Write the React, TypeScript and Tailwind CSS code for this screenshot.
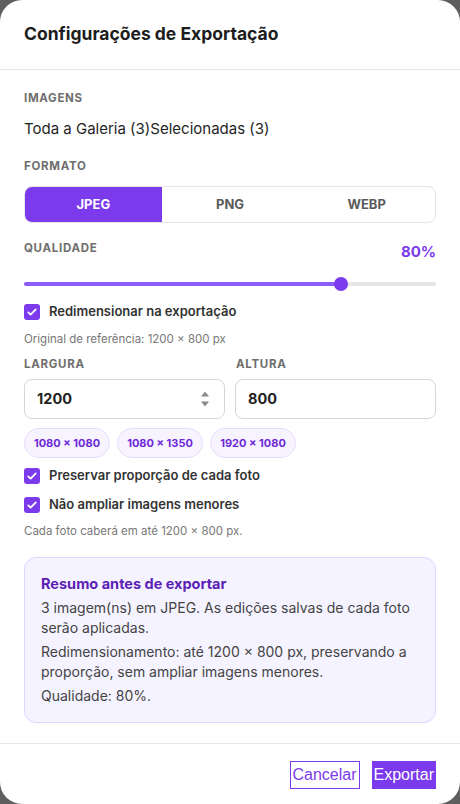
import React from "react";

const font = { fontFamily: "Inter, 'Noto Sans', sans-serif" };

function Label({ children }: { children: React.ReactNode }) {
  return (
    <div className="text-[11.5px] font-bold uppercase leading-4 tracking-[0.06em] text-[#6e6e6e]">
      {children}
    </div>
  );
}

function Check({ label, className = "" }: { label: string; className?: string }) {
  return (
    <div className={`flex h-[18px] items-center gap-[9px] ${className}`}>
      <span className="flex h-4 w-4 items-center justify-center rounded-[3px] bg-[#7c3aed]">
        <svg viewBox="0 0 16 16" className="h-3 w-3" fill="none">
          <path d="M3 8.5l3.2 3L13 4.5" stroke="white" strokeWidth="2.4" strokeLinecap="round" strokeLinejoin="round" />
        </svg>
      </span>
      <span className="text-[13px] font-semibold text-[#333]">{label}</span>
    </div>
  );
}

export default function App() {
  const formats = ["JPEG", "PNG", "WEBP"];
  const presets = ["1080 × 1080", "1080 × 1350", "1920 × 1080"];

  return (
    <div className="h-[804px] w-[460px] bg-[#5e5e5e]" style={font}>
      <div className="flex h-full w-full flex-col rounded-[22px] bg-white">
        <header className="flex h-[70px] shrink-0 items-center border-b border-[#e6e6e6] px-6">
          <h1 className="text-[17.5px] font-bold text-[#1d1d1d]">Configurações de Exportação</h1>
        </header>

        <div className="flex flex-1 flex-col border-b border-[#e6e6e6] px-6 pt-5">
          <Label>Imagens</Label>
          <div className="mt-[13px] text-[15px] leading-5 text-[#1f1f1f]">
            <span>Toda a Galeria (3)</span>
            <span>Selecionadas (3)</span>
          </div>

          <div className="mt-[19px]">
            <Label>Formato</Label>
          </div>
          <div className="mt-3 flex h-[37px] overflow-hidden rounded-lg border border-[#e6e6e6]">
            {formats.map((f, i) => (
              <div
                key={f}
                className={`flex flex-1 items-center justify-center text-[13px] font-bold ${
                  i === 0 ? "bg-[#7c3aed] text-white" : "text-[#5a5a5a]"
                }`}
              >
                {f}
              </div>
            ))}
          </div>

          <div className="mt-[17px] flex items-start justify-between">
            <Label>Qualidade</Label>
            <span className="mt-[2px] text-[15px] font-bold leading-5 text-[#7c3aed]">80%</span>
          </div>

          <div className="relative mt-[15px] flex h-[14px] items-center">
            <div className="h-1 w-full rounded-full bg-[#e6e6e6]">
              <div className="h-1 w-[77%] rounded-full bg-[#8b5cf6]" />
            </div>
            <span className="absolute left-[310px] top-0 h-[14px] w-[14px] rounded-full bg-[#7c3aed]" />
          </div>

          <Check label="Redimensionar na exportação" className="mt-3" />
          <div className="mt-[10px] text-[11.5px] leading-4 text-[#777]">
            Original de referência: 1200 × 800 px
          </div>

          <div className="mt-[9px] grid grid-cols-2 gap-[10px]">
            <div>
              <Label>Largura</Label>
              <div className="mt-[7px] flex h-10 items-center justify-between rounded-lg border border-[#d6d6d6] pl-3 pr-[14px]">
                <span className="text-[14.5px] font-bold text-[#222]">1200</span>
                <svg viewBox="0 0 10 20" className="h-[20px] w-[10px]">
                  <path d="M1 7.5L5 2.5L9 7.5Z" fill="#8a8a8a" />
                  <path d="M1 12.5L5 17.5L9 12.5Z" fill="#8a8a8a" />
                </svg>
              </div>
            </div>
            <div>
              <div className="pl-px">
                <Label>Altura</Label>
              </div>
              <div className="mt-[7px] flex h-10 items-center rounded-lg border border-[#d6d6d6] pl-3">
                <span className="text-[14.5px] font-bold text-[#222]">800</span>
              </div>
            </div>
          </div>

          <div className="mt-[9px] flex gap-[7px]">
            {presets.map((p) => (
              <span
                key={p}
                className="flex h-[30px] w-[86px] items-center justify-center rounded-full border border-[#e6dcfd] bg-[#f7f3ff] text-[11px] font-bold text-[#6d28d9]"
              >
                {p}
              </span>
            ))}
          </div>

          <Check label="Preservar proporção de cada foto" className="mt-[9px]" />
          <Check label="Não ampliar imagens menores" className="mt-[11px]" />
          <div className="mt-[9px] text-[11.5px] leading-4 text-[#777]">
            Cada foto caberá em até 1200 × 800 px.
          </div>

          <div className="mt-[18px] rounded-xl border border-[#ddd6fe] bg-[#f5f3ff] px-4 py-4">
            <div className="text-[14.5px] font-bold leading-5 text-[#5b21b6]">Resumo antes de exportar</div>
            <p className="mt-1 text-[14px] leading-5 text-[#444]">
              3 imagem(ns) em JPEG. As edições salvas de cada foto serão aplicadas.
            </p>
            <p className="mt-1 text-[14px] leading-5 text-[#444]">
              Redimensionamento: até 1200 × 800 px, preservando a proporção, sem ampliar imagens menores.
            </p>
            <p className="mt-1 text-[14px] leading-5 text-[#444]">Qualidade: 80%.</p>
          </div>
          <div className="h-5" />
        </div>

        <footer
          className="flex h-[61px] shrink-0 items-center justify-end gap-3 px-6"
          style={{ fontFamily: "'Liberation Sans', Arial, sans-serif" }}
        >
          <button className="flex h-[28px] items-center border border-[#7c3aed] px-[2px] text-[16px] text-[#7c3aed]">
            Cancelar
          </button>
          <button className="flex h-[28px] items-center bg-[#7c3aed] px-[2px] text-[16px] text-white">
            Exportar
          </button>
        </footer>
      </div>
    </div>
  );
}
